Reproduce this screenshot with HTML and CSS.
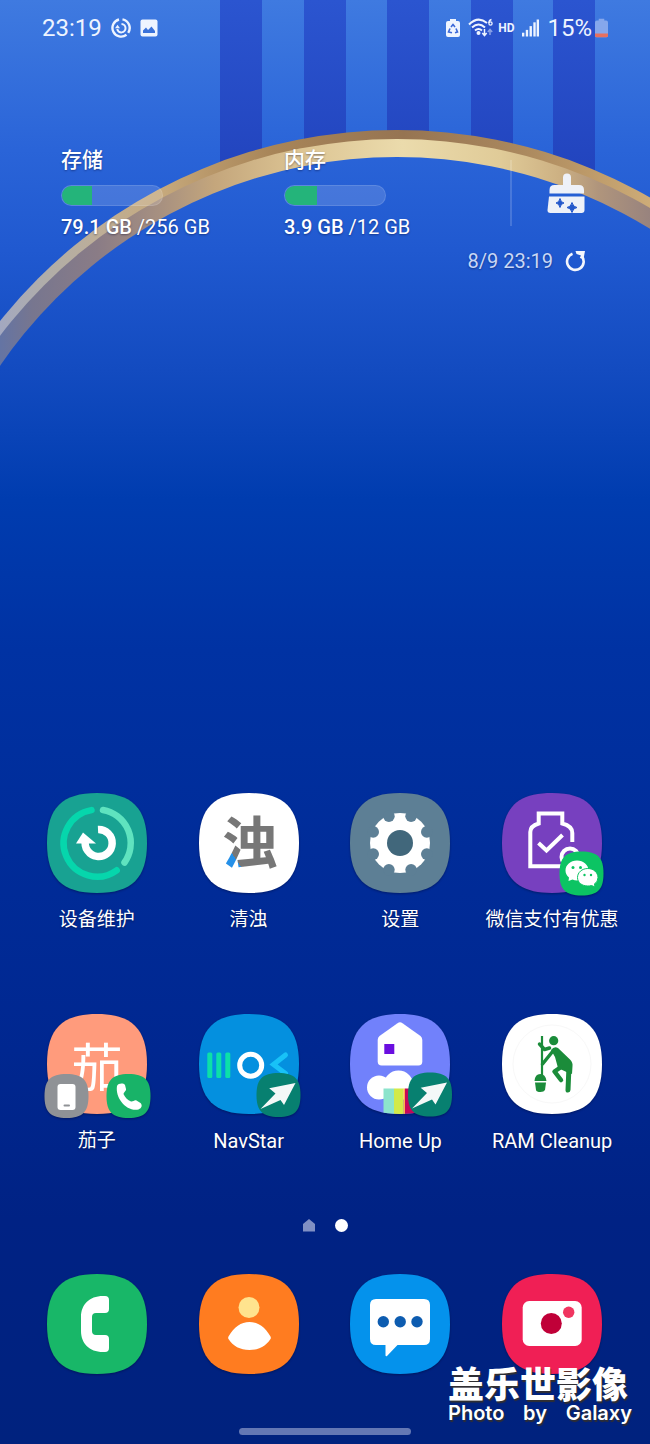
FILE: index.html
```html
<!DOCTYPE html>
<html lang="zh-CN">
<head>
<meta charset="utf-8">
<meta name="viewport" content="width=device-width, initial-scale=1">
<title>Home</title>
<link rel="stylesheet" href="styles.css">
</head>
<body>
<svg class="defs" width="0" height="0" aria-hidden="true">
  <defs>
    <path id="tile" d="M0 50C0 15 15 0 50 0S100 15 100 50 85 100 50 100 0 85 0 50Z"/>
    <path id="badge" d="M0 22C0 6 6 0 22 0S44 6 44 22 38 44 22 44 0 38 0 22Z"/>
    <g id="launch">
      <use href="#badge" fill="#078070"/>
      <path d="M39 10L12.700 15.300 19 20.500 4 36 24 27 27.500 32Z" fill="#f4f8f8"/>
    </g>
    <clipPath id="tile-clip"><use href="#tile"/></clipPath>
    <linearGradient id="stripe" x1="0" y1="0" x2="0" y2="1">
      <stop offset="0" stop-color="#2b55d0"/><stop offset="1" stop-color="#2142bc"/>
    </linearGradient>
    <linearGradient id="rim" gradientUnits="userSpaceOnUse" x1="0" y1="0" x2="650" y2="0">
      <stop offset="0" stop-color="#a3a8c0"/><stop offset=".07" stop-color="#b0ada9"/>
      <stop offset=".15" stop-color="#bdae98"/><stop offset=".25" stop-color="#c6a97c"/>
      <stop offset=".32" stop-color="#b9986a"/><stop offset=".42" stop-color="#a88558"/>
      <stop offset=".62" stop-color="#967452"/><stop offset=".8" stop-color="#aa885e"/>
      <stop offset=".9" stop-color="#bc9968"/><stop offset="1" stop-color="#cdac78"/>
    </linearGradient>
    <linearGradient id="band" gradientUnits="userSpaceOnUse" x1="0" y1="0" x2="650" y2="0">
      <stop offset="0" stop-color="#6474a4"/><stop offset=".05" stop-color="#77768f"/>
      <stop offset=".15" stop-color="#8a7c86"/><stop offset=".25" stop-color="#a89180"/>
      <stop offset=".33" stop-color="#c4a67c"/><stop offset=".46" stop-color="#dcc493"/>
      <stop offset=".62" stop-color="#ebdbac"/><stop offset=".77" stop-color="#e0cb98"/>
      <stop offset=".86" stop-color="#cdb183"/><stop offset=".92" stop-color="#b0957c"/>
      <stop offset="1" stop-color="#98837e"/>
    </linearGradient>
    <linearGradient id="sky" gradientUnits="userSpaceOnUse" x1="0" y1="0" x2="0" y2="500">
      <stop offset="0" stop-color="#3f7ae0"/><stop offset=".3" stop-color="#2a64d8"/>
      <stop offset=".5" stop-color="#2059d0"/><stop offset=".74" stop-color="#134bc0"/>
      <stop offset="1" stop-color="#003caf"/>
    </linearGradient>
  </defs>
</svg>

<div class="screen">
  <svg class="wallpaper" viewBox="0 0 650 500" preserveAspectRatio="xMidYMin slice" aria-hidden="true">
    <g fill="url(#stripe)">
      <rect x="220" width="42" height="190"/><rect x="304" width="42" height="190"/>
      <rect x="387" width="42" height="190"/><rect x="471" width="42" height="190"/>
      <rect x="553" width="42" height="190"/>
    </g>
    <circle cx="397" cy="638" r="508" fill="url(#rim)"/>
    <circle cx="397" cy="638" r="499" fill="url(#band)"/>
    <circle cx="397" cy="639" r="482" fill="url(#sky)"/>
  </svg>

  <header class="status">
    <div class="status-side status-left">
      <time class="status-text">23:19</time>
      <svg width="20" height="20" viewBox="0 0 20 20" fill="none" stroke="#eef4ff" stroke-width="2.400">
        <path d="M8 1.500A8.700 8.700 0 1 0 15.500 16.800M11.500 1.400A8.700 8.700 0 0 1 17.200 14.800"/>
        <path d="M10.500 6A4.200 4.200 0 1 1 6.200 11" stroke-width="2"/><path d="M4 10.300L6.500 6.800 9 10.300Z" fill="#eef4ff" stroke="none"/>
      </svg>
      <svg width="18" height="18" viewBox="0 0 18 18">
        <rect x=".5" y=".5" width="17" height="17" rx="2" fill="#eef4ff"/>
        <path d="M3 14V11.500L6 8.500 8 11 11.500 7.500 15 12V14Z" fill="#3b72da"/>
      </svg>
    </div>
    <div class="status-side status-right">
      <svg width="14" height="20" viewBox="0 0 14 20">
        <path d="M4 1h6v2h2q2 0 2 2v12q0 2-2 2H2q-2 0-2-2V5q0-2 2-2h2Z" fill="#eef4ff"/>
        <path d="M5 9L7 6.500 9 9M10 10.500L11.500 14 9 14.800M6 14.800L2.500 14 4 10.500" fill="none" stroke="#3b68d8" stroke-width="1.600"/>
      </svg>
      <svg class="wifi" width="26" height="20" viewBox="0 0 26 20" fill="none" stroke="#eef4ff" stroke-width="2">
        <path d="M1 6.500Q10-2.500 19 5M4 9.500Q10.500 3.500 17 9.500M7 12.500Q10.500 9.500 14 12.500"/>
        <circle cx="10.500" cy="15" r="2" fill="#eef4ff" stroke="none"/>
        <path d="M16.500 11v6M14.300 15l2.200 2.500L18.700 15" stroke-width="1.500"/>
        <path d="M22 17v-5M19.800 14l2.200-2.500L24.200 14" stroke-width="1.500" opacity=".5"/>
        <path d="M23.500 1.500Q21 2 20.800 5" stroke-width="1.300"/><circle cx="22.500" cy="5.500" r="1.600" stroke-width="1.300"/>
      </svg>
      <span class="hd">HD</span>
      <svg class="signal" width="17" height="18" viewBox="0 0 18 18" fill="#eef4ff">
        <rect x="0" y="14" width="2.500" height="4"/><rect x="4" y="11" width="2.500" height="7"/><rect x="8" y="7" width="2.500" height="11"/><rect x="12" y="3" width="2.500" height="15"/><rect x="15.500" y="0" width="2.500" height="18"/>
      </svg>
      <span class="battery">
        <span class="status-text">15%</span>
        <svg width="13" height="20" viewBox="0 0 14 20">
          <path d="M4 0h6v2h2q2 0 2 2v14q0 2-2 2H2q-2 0-2-2V4q0-2 2-2h2Z" fill="#86a7ec"/>
          <path d="M0 16h14v2q0 2-2 2H2q-2 0-2-2Z" fill="#e8705f"/>
        </svg>
      </span>
    </div>
  </header>

  <section class="care">
    <div class="care-grid">
      <div class="meter">
        <h2 class="meter-title" id="storage">存储</h2>
        <div class="meter-track" role="progressbar" aria-labelledby="storage" aria-valuenow="31"><div class="meter-fill" style="width:30%"></div></div>
        <p class="meter-value"><b>79.1 GB</b> /256 GB</p>
      </div>
      <div class="meter">
        <h2 class="meter-title" id="memory">内存</h2>
        <div class="meter-track" role="progressbar" aria-labelledby="memory" aria-valuenow="32"><div class="meter-fill" style="width:32%"></div></div>
        <p class="meter-value"><b>3.9 GB</b> /12 GB</p>
      </div>
      <div class="clean">
        <button class="plain" type="button" aria-label="清理">
          <svg width="38" height="40" viewBox="0 0 38 40" fill="#eef1f8">
            <path d="M16 12V4.500a4 4 0 0 1 8 0V12h8q5 0 5 5v3.500H2.500V17q0-5 5-5Z"/>
            <path d="M2 23.500H37.500V37q0 3-3 3H3.500Q.3 40 .5 37Z"/>
            <path d="M13 25.500q.8 4 4 4.500-3.200.5-4 4.500-.8-4-4-4.500 3.200-.5 4-4.500ZM25 29.500q1 4.500 5 5-4 .5-5 5-1-4.500-5-5 4-.5 5-5Z" fill="#2458cb" stroke="#2458cb"/>
          </svg>
        </button>
      </div>
    </div>
    <div class="updated">
      <time>8/9 23:19</time>
      <button class="plain" type="button" aria-label="刷新">
        <svg width="20" height="22" viewBox="0 0 20 22">
          <path d="M7.500 3.800A8.300 8.300 0 1 0 16.500 6" fill="none" stroke="#f4f6fc" stroke-width="2.600"/>
          <path d="M10.500 1H20L18.500 9 14.800 8 16 5.500 11.500 4Z" fill="#f4f6fc"/>
        </svg>
      </button>
    </div>
  </section>

  <main class="apps">
    <button class="app" type="button">
      <svg class="icon" viewBox="0 0 100 100">
        <use href="#tile" fill="#18a292"/>
        <g fill="none" stroke-linecap="round" stroke-width="6.500">
          <path d="M44.500 17.100A33.500 33.500 0 1 0 69.700 77.300" stroke="#06d6ac"/>
          <path d="M56 17A33.500 33.500 0 0 1 77.500 69.500" stroke="#5fe3bf"/>
        </g>
        <path d="M51 36.500A13.500 13.500 0 1 1 38.500 47" fill="none" stroke="#fff" stroke-width="7.500"/>
        <path d="M36 39.500L49 50.500H29Z" fill="#fff"/>
      </svg>
      <span class="label">设备维护</span>
    </button>
    <button class="app" type="button">
      <svg class="icon" viewBox="0 0 100 100">
        <defs><linearGradient id="ink" gradientUnits="userSpaceOnUse" x1="24" y1="78" x2="64" y2="52">
          <stop offset=".36" stop-color="#2590e8"/><stop offset=".36" stop-color="#777"/>
        </linearGradient></defs>
        <use href="#tile" fill="#fff"/>
        <text class="logo-zhuo" x="51" y="70" text-anchor="middle" fill="url(#ink)">浊</text>
      </svg>
      <span class="label">清浊</span>
    </button>
    <button class="app" type="button">
      <svg class="icon" viewBox="0 0 100 100">
        <use href="#tile" fill="#5d7f95"/>
        <circle cx="50" cy="50" r="30" fill="#fff"/>
        <g fill="#5d7f95">
          <circle cx="61.100" cy="23.200" r="5.800"/><circle cx="76.800" cy="38.900" r="5.800"/><circle cx="76.800" cy="61.100" r="5.800"/><circle cx="61.100" cy="76.800" r="5.800"/>
          <circle cx="38.900" cy="76.800" r="5.800"/><circle cx="23.200" cy="61.100" r="5.800"/><circle cx="23.200" cy="38.900" r="5.800"/><circle cx="38.900" cy="23.200" r="5.800"/>
        </g>
        <circle cx="50" cy="50" r="13" fill="#41677b"/>
      </svg>
      <span class="label">设置</span>
    </button>
    <button class="app" type="button">
      <svg class="icon" viewBox="0 0 100 100">
        <use href="#tile" fill="#7740bf"/>
        <g fill="none" stroke="#fff" stroke-width="4">
          <path d="M60 73.300H28.300V39Q28.300 33 36.700 30.500V20.500H60.300V30.500Q70.300 33 70.300 40V49"/>
          <path d="M36.500 50L44.500 57.500 60.500 42"/>
          <circle cx="68" cy="64" r="8.500"/>
        </g>
        <g transform="translate(57.500 58.500)">
          <use href="#badge" fill="#0cc463"/>
          <path d="M17.500 9C11 9 6 13.500 6 19Q6 23 9.500 26L9 29.500 13 28Q15 29 17.500 29C24 29 29 24.500 29 19S24 9 17.500 9Z" fill="#fff"/>
          <path d="M28.300 17C22.500 17 18 21 18 26S22.500 34.500 28.300 34.500Q30.500 34.500 32 34L35.500 35.500 35 32.500Q38.500 30 38.500 26C38.500 21 34 17 28.300 17Z" fill="#fff" stroke="#0cc463"/>
          <g fill="#0cc463"><circle cx="13.500" cy="16" r="1.500"/><circle cx="21" cy="16" r="1.500"/><circle cx="25" cy="23.500" r="1.200"/><circle cx="31.500" cy="23.500" r="1.200"/></g>
        </g>
      </svg>
      <span class="label">微信支付有优惠</span>
    </button>
    <button class="app" type="button">
      <svg class="icon" viewBox="0 0 100 100">
        <use href="#tile" fill="#ff9b7c"/>
        <text class="logo-qie" x="50" y="73" text-anchor="middle" fill="#fff">茄</text>
        <g transform="translate(-2.500 60)">
          <use href="#badge" fill="#8f9296"/>
          <rect x="13" y="10" width="18" height="26" rx="3" fill="#fff"/><rect x="19" y="30.500" width="6.500" height="2" rx="1" fill="#8f9296"/>
        </g>
        <g transform="translate(59.500 60)">
          <use href="#badge" fill="#18b368"/>
          <path d="M10.500 12C12 9 17 9 18.500 11L19.500 15C20 17 16.500 18.500 17.200 20.500 19 24 21 26 24.500 27.500 26.500 28 28 25.500 30 26.500L34 29C36 31 35.500 34 32 35.500 20 38 8.500 24 10.500 12Z" fill="#fff"/>
        </g>
      </svg>
      <span class="label">茄子</span>
    </button>
    <button class="app" type="button">
      <svg class="icon" viewBox="0 0 100 100">
        <use href="#tile" fill="#0490df"/>
        <g fill="#0ce0a8"><rect x="8.300" y="38.500" width="5" height="25.500" rx="1.500"/><rect x="17.300" y="38.500" width="5" height="25.500" rx="1.500"/><rect x="26.300" y="38.500" width="5" height="25.500" rx="1.500"/></g>
        <circle cx="51.700" cy="51.300" r="11" fill="none" stroke="#fff" stroke-width="5"/>
        <path d="M86.500 41L74.500 50.500 86.500 59.500" fill="none" stroke="#18c2f7" stroke-width="5" stroke-linecap="round"/>
        <use href="#launch" x="57.500" y="59"/>
      </svg>
      <span class="label label-latin">NavStar</span>
    </button>
    <button class="app" type="button">
      <svg class="icon" viewBox="0 0 100 100">
        <use href="#tile" fill="#7181fb"/>
        <path d="M47.500 9.200Q50 7.500 52.500 9.200L70.500 22Q72.300 23.500 72.300 26V47.500Q72.300 51.500 68.300 51.500H31.700Q27.700 51.500 27.700 47.500V26Q27.700 23.500 29.500 22Z" fill="#fff"/>
        <rect x="34.300" y="30" width="10" height="10" fill="#6a0ee0"/>
        <g clip-path="url(#tile-clip)">
          <circle cx="29" cy="73.500" r="12" fill="#fff"/><circle cx="48.500" cy="71.500" r="15" fill="#fff"/>
          <rect x="33.500" y="74.500" width="10.500" height="26" fill="#8ce4cc"/><rect x="44" y="74.500" width="9.500" height="26" fill="#d2ea48"/>
          <rect x="53.500" y="74.500" width="1.500" height="26" fill="#ffb04a"/><rect x="55" y="74.500" width="14" height="26" fill="#c4085a"/>
        </g>
        <use href="#launch" x="58" y="58.500"/>
      </svg>
      <span class="label label-latin">Home Up</span>
    </button>
    <button class="app" type="button">
      <svg class="icon" viewBox="0 0 100 100">
        <use href="#tile" fill="#fff"/>
        <circle cx="50" cy="50" r="39" fill="none" stroke="#f8f8f8"/>
        <g fill="none" stroke="#1b8c3a" stroke-linecap="round" stroke-linejoin="round">
          <path d="M40 22V62" stroke-width="2.200" stroke-linecap="butt"/>
          <path d="M37.500 30L42.500 35.500 47.500 34" stroke-width="3.500"/>
          <path d="M51 37L40.500 50" stroke-width="3.500"/>
          <path d="M62 51L52.500 57.500 59 66" stroke-width="4.500"/>
          <path d="M67 52L66 76" stroke-width="5"/>
        </g>
        <g fill="#1b8c3a">
          <circle cx="51.700" cy="26.700" r="4.600"/>
          <path d="M49 36Q52 32 56 34L68 45.500Q71 48.500 70.500 52L70 60 64.500 58 56 54 53 43Z"/>
          <path d="M32.500 67Q33 60 38.300 60 43.500 60 44.500 67ZM33 68.500H44L43 76Q42 78 38.500 78 34.500 78 34 76Z"/>
        </g>
      </svg>
      <span class="label label-latin">RAM Cleanup</span>
    </button>
  </main>

  <nav class="pages" aria-label="页面">
    <svg width="12" height="13" viewBox="0 0 12 13"><path d="M6 0L12 5V12.500H0V5Z" fill="#8090c4"/></svg>
    <span class="page-current"></span>
  </nav>

  <footer class="dock">
    <button class="app" type="button" aria-label="电话">
      <svg class="icon" viewBox="0 0 100 100">
        <use href="#tile" fill="#18b768"/>
        <path d="M58 22Q62 22 62 26V35Q62 39 58 39H49Q45 39 45 43V57Q45 61 49 61H58Q62 61 62 65V74Q62 78 58 78H56C42 78 34 69 34 57V43C34 31 42 22 56 22Z" fill="#fff"/>
      </svg>
    </button>
    <button class="app" type="button" aria-label="联系人">
      <svg class="icon" viewBox="0 0 100 100">
        <use href="#tile" fill="#ff7c20"/>
        <circle cx="50" cy="33.500" r="10.500" fill="#ffe38e"/>
        <path d="M29.500 65Q28.800 64 29.500 62.500C35 53 42 48 50.500 48S66 53 71.500 62.500Q72.200 64 71.500 65C67 72 60 76 50.500 76S34 72 29.500 65Z" fill="#fff"/>
      </svg>
    </button>
    <button class="app" type="button" aria-label="信息">
      <svg class="icon" viewBox="0 0 100 100">
        <use href="#tile" fill="#0492ec"/>
        <path d="M26 25H74Q80 25 80 31V65Q80 71 74 71H47.500L37 82Q35.500 83 35.500 81V71H26Q20 71 20 65V31Q20 25 26 25Z" fill="#fff"/>
        <g fill="#0d5cb0"><circle cx="33.300" cy="47.700" r="5.700"/><circle cx="50.200" cy="47.700" r="5.700"/><circle cx="67" cy="47.700" r="5.700"/></g>
      </svg>
    </button>
    <button class="app" type="button" aria-label="相机">
      <svg class="icon" viewBox="0 0 100 100">
        <use href="#tile" fill="#f01f55"/>
        <rect x="20.700" y="27" width="59" height="45" rx="6.500" fill="#fff"/>
        <circle cx="49.300" cy="49.500" r="10.500" fill="#c00038"/><circle cx="66.700" cy="38.300" r="5.700" fill="#f03560"/>
      </svg>
    </button>
  </footer>

  <div class="gesture"></div>

  <div class="watermark">
    <p class="mark-cn">盖乐世影像</p>
    <p class="mark-en">Photo by Galaxy</p>
  </div>
</div>
</body>
</html>
```

FILE: styles.css
```css
* { box-sizing: border-box; }

body {
  margin: 0;
  font-family: Roboto, "Noto Sans CJK SC", sans-serif;
  color: #fff;
}

h2, p { margin: 0; }

button {
  border: 0;
  padding: 0;
  background: none;
  color: inherit;
  font: inherit;
  cursor: pointer;
}

svg { display: block; }

.defs { position: absolute; }

.screen {
  position: relative;
  isolation: isolate;
  display: flex;
  flex-direction: column;
  min-height: 100vh;
  overflow: hidden;
  background: linear-gradient(#3f7ae0 0, #2a64d8 150px, #2059d0 250px, #134bc0 370px, #003caf 500px, #0032a3 650px, #002c99 850px, #002790 1050px, #002284 1220px, #00227e 1440px);
}

.wallpaper {
  position: absolute;
  z-index: -1;
  inset: 0 0 auto;
  width: 100%;
}

.status {
  display: flex;
  justify-content: space-between;
  height: 56px;
  padding: 0 42px;
}

.status-side {
  display: flex;
  align-items: center;
  color: #eef4ff;
}

.status-left { gap: 9px; }
.status-right { gap: 8px; }

.status-text {
  font-size: 24px;
  line-height: 28px;
}

.hd {
  margin-left: -4px;
  font-size: 12px;
  font-weight: 700;
}

.battery {
  display: flex;
  align-items: center;
  gap: 3px;
}

.care {
  margin-top: 90px;
  padding: 0 65px 0 61px;
  text-shadow: 0 1px 2px rgba(0, 0, 40, .4);
}

.care-grid {
  display: grid;
  grid-template-columns: 223fr 226fr 75fr;
}

.meter-title {
  font-size: 21px;
  font-weight: 500;
  line-height: 28px;
}

.meter-track {
  width: 102px;
  height: 21px;
  margin: 11px 0 9px;
  overflow: hidden;
  border: 1px solid rgba(255, 255, 255, .12);
  border-radius: 11px;
  background: rgba(255, 255, 255, .15);
}

.meter-fill {
  height: 100%;
  background: #24b47a;
}

.meter-value {
  font-size: 20px;
  line-height: 24px;
  white-space: nowrap;
}

.meter-value b { font-weight: 500; }

.clean {
  display: flex;
  align-items: center;
  justify-content: flex-end;
  height: 66px;
  margin-top: 14px;
  border-left: 2px solid rgba(255, 255, 255, .16);
}

.updated {
  display: flex;
  align-items: center;
  justify-content: flex-end;
  gap: 12px;
  margin-top: 10px;
  color: #c9d8f6;
  font-size: 20px;
  line-height: 24px;
}

.apps {
  display: grid;
  grid-template-columns: repeat(4, 1fr);
  row-gap: 82px;
  margin-top: auto;
  padding: 0 22px 0 21px;
}

.app {
  display: flex;
  flex-direction: column;
  align-items: center;
  min-width: 0;
}

.icon {
  width: 100px;
  height: 100px;
  overflow: visible;
  filter: drop-shadow(0 1px 1px rgba(0, 0, 30, .35));
}

.label {
  margin-top: 15px;
  font-size: 19px;
  line-height: 24px;
  white-space: nowrap;
  text-shadow: 0 1px 2px rgba(0, 0, 30, .5);
}

.label-latin { font-size: 20px; }

.logo-zhuo {
  font-family: "Noto Sans CJK SC", sans-serif;
  font-size: 56px;
  font-weight: 700;
}

.logo-qie {
  font-family: "Noto Sans CJK SC", sans-serif;
  font-size: 52px;
  font-weight: 400;
}

.pages {
  display: flex;
  align-items: center;
  justify-content: center;
  gap: 20px;
  margin-top: 66px;
}

.page-current {
  width: 13px;
  height: 13px;
  border-radius: 50%;
  background: #fff;
}

.dock {
  display: grid;
  grid-template-columns: repeat(4, 1fr);
  margin-top: 42px;
  padding: 0 22px 0 21px;
}

.gesture {
  width: 172px;
  height: 7px;
  margin: 54px auto 9px;
  border-radius: 4px;
  background: #6478b4;
}

.watermark {
  position: absolute;
  right: 18px;
  bottom: 19px;
  width: 184px;
  text-shadow: 1px 2px 1px rgba(60, 50, 30, .8);
}

.mark-cn {
  font-family: "Noto Sans CJK SC", sans-serif;
  font-size: 36px;
  font-weight: 900;
  line-height: 38px;
}

.mark-en {
  font-family: Inter, sans-serif;
  font-size: 20px;
  font-weight: 600;
  line-height: 24px;
  text-align-last: justify;
}
```
